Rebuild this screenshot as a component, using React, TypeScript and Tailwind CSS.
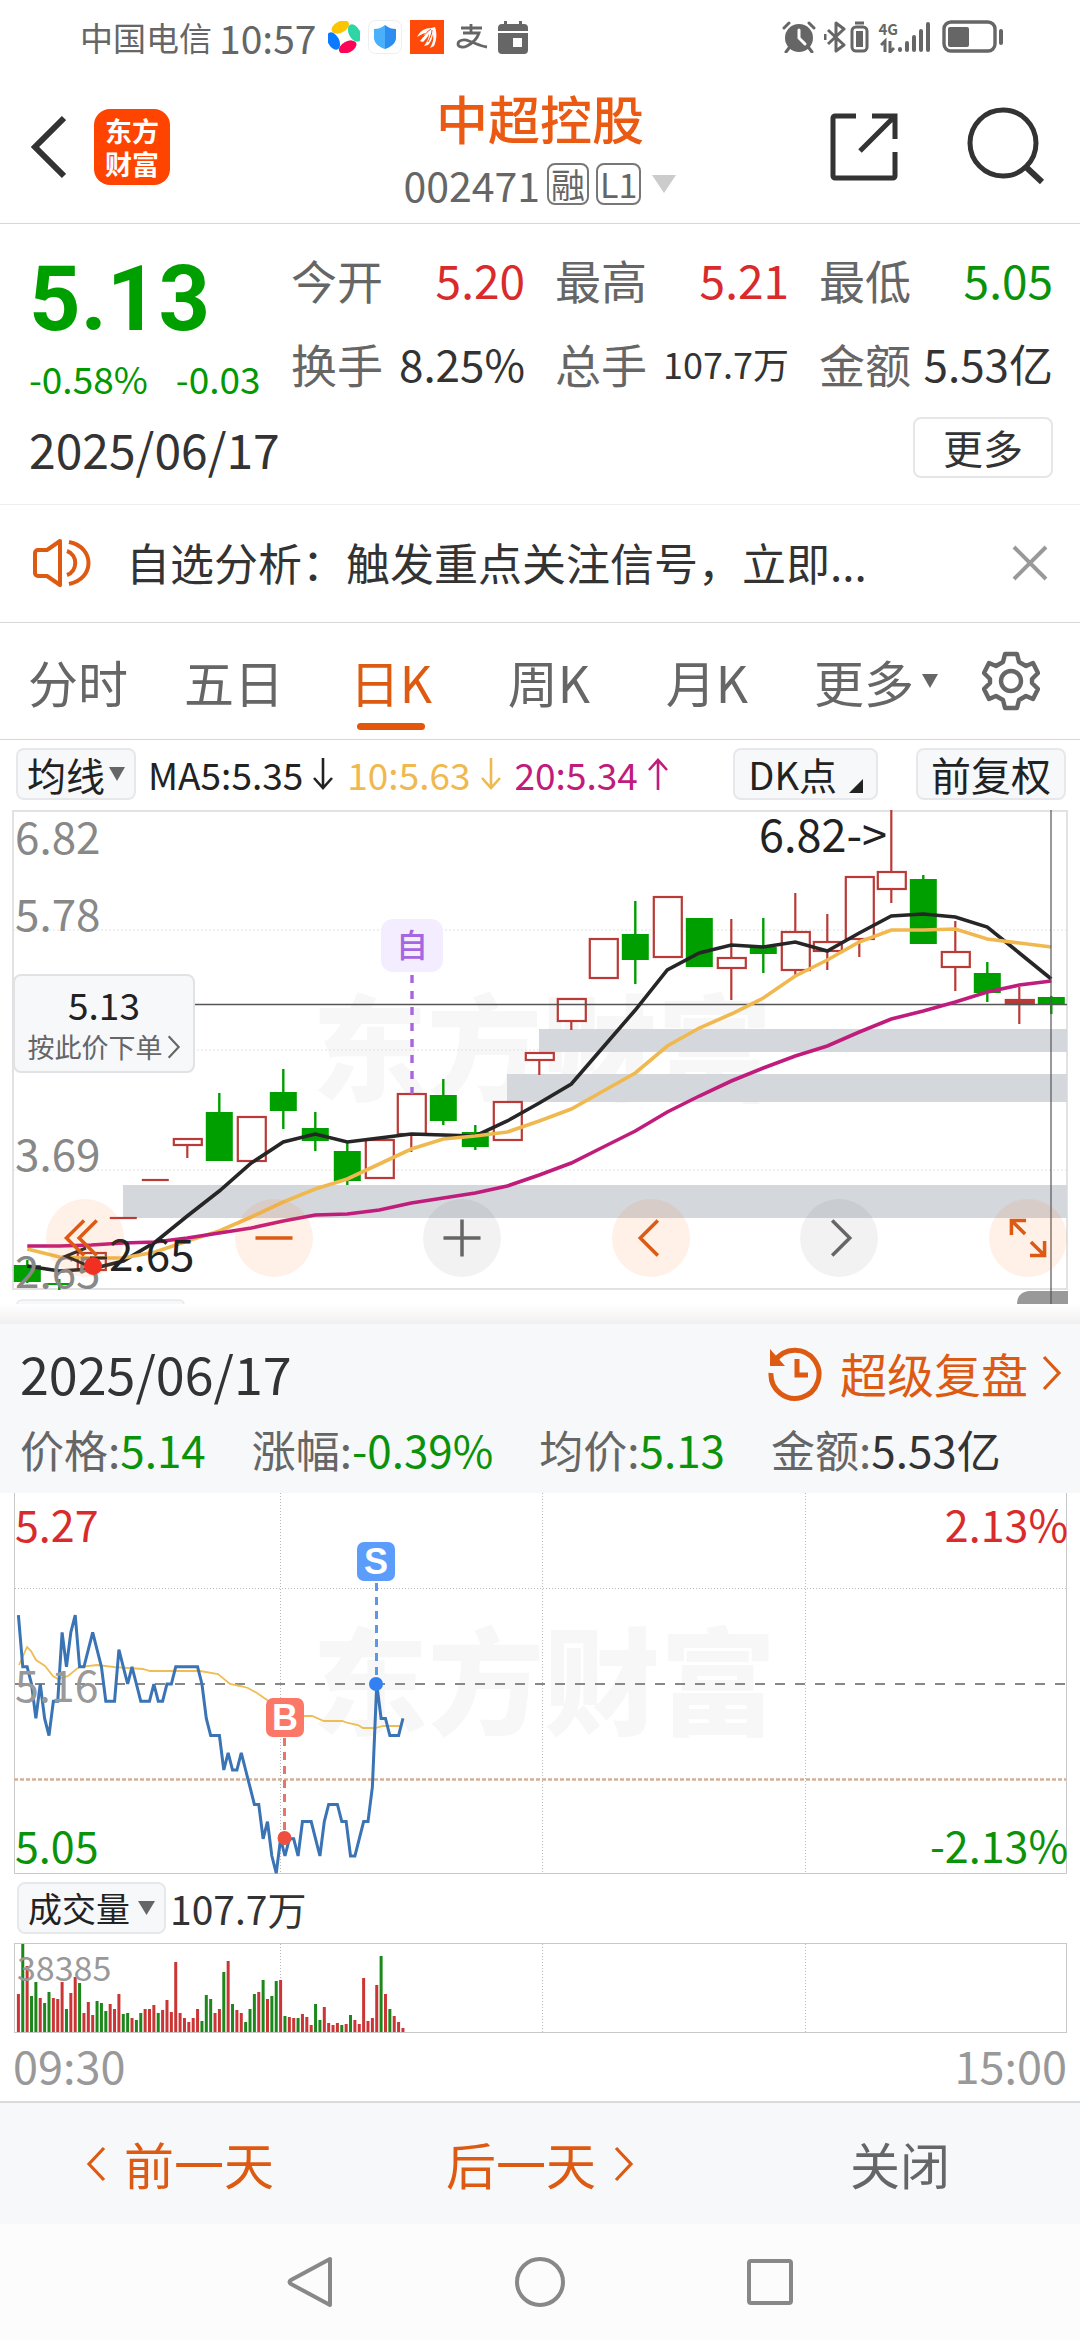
import type { ReactNode } from 'react';

type Candle = {
  open: number;   // 实体上沿
  close: number;  // 实体下沿
  high: number;
  low: number;
  up: boolean;
  solid?: boolean;
};

const GREEN = '#009f00';
const RED = '#b93a36';

const c = (up: boolean, open: number, close: number, high = open, low = close, solid = false): Candle => ({
  up, open, close, high, low, solid,
});

// 日K：每根 K 线的纵向位置
const CANDLES: Candle[] = [
  c(false, 1265, 1282, 1260, 1283),
  c(false, 1283, 1285, 1279, 1290),
  c(true, 1253, 1270),
  c(true, 1218, 1219),
  c(true, 1180, 1181),
  c(true, 1139, 1145, 1139, 1158),
  c(false, 1112, 1161, 1093, 1161),
  c(true, 1117, 1161),
  c(false, 1092, 1111, 1069, 1129),
  c(false, 1128, 1141, 1112, 1151),
  c(false, 1151, 1181, 1143, 1185),
  c(true, 1140, 1178),
  c(true, 1094, 1134, 1094, 1152),
  c(false, 1095, 1121, 1079, 1125),
  c(false, 1132, 1147, 1125, 1150),
  c(true, 1102, 1140),
  c(true, 1053, 1060, 1053, 1075),
  c(true, 999, 1021, 999, 1030),
  c(true, 939, 978),
  c(false, 934, 960, 901, 984),
  c(true, 897, 957),
  c(false, 918, 967),
  c(true, 958, 968, 919, 1000),
  c(false, 947, 954, 918, 973),
  c(true, 932, 970, 893, 977),
  c(true, 942, 951, 914, 970),
  c(true, 877, 939, 877, 957),
  c(true, 872, 889, 810, 903),
  c(false, 879, 944, 875, 944),
  c(true, 952, 967, 921, 991),
  c(false, 973, 993, 962, 1002),
  c(true, 1000, 1004, 987, 1024, true),
  c(false, 997, 1004, 996, 1014),
];

const MA5 = [1266, 1271, 1269, 1261, 1242, 1216, 1191, 1163, 1142, 1134, 1142, 1138, 1134, 1135, 1136, 1121, 1103, 1084, 1047, 1010, 970, 953, 945, 947, 942, 951, 933, 916, 914, 917, 927, 953, 979];
const MA10 = [1249, 1257, 1258, 1258, 1252, 1241, 1231, 1217, 1202, 1189, 1179, 1164, 1149, 1139, 1136, 1132, 1121, 1109, 1091, 1073, 1046, 1028, 1014, 998, 976, 960, 942, 930, 930, 929, 939, 943, 947];
const MA20 = [1246, 1246, 1245, 1243, 1242, 1238, 1233, 1228, 1221, 1215, 1214, 1210, 1203, 1198, 1193, 1186, 1175, 1163, 1147, 1131, 1112, 1096, 1081, 1068, 1056, 1046, 1032, 1019, 1011, 1002, 992, 985, 981];

// 分时价格，单位：分
const PRICES = [
  520, 517, 517, 516, 514, 516, 514, 513, 515, 515, 519, 517, 519, 520, 517, 517, 518, 519, 518, 517,
  515, 515, 515, 518, 517, 516, 517, 516, 515, 515, 515, 516, 515, 515, 516, 516, 517, 517, 517, 517,
  517, 517, 516, 514, 513, 513, 513, 511, 512, 511, 511, 512, 511, 510, 509, 509, 507, 508, 506, 505,
  507, 506, 507, 507, 506, 508, 508, 508, 507, 506, 508, 509, 509, 509, 508, 508, 506, 506, 507, 508,
  508, 510, 516, 514, 514, 513, 513, 513, 514,
];

const AVG_LINE =
  '19,1665 23,1656 27,1647 31,1651 36,1660 45,1666 53,1676 58,1679 68,1676 79,1667 97,1665 114,1667 128,1668 143,1669 150,1671 200,1671 218,1674 230,1684 240,1686 248,1688 257,1693 267,1700 280,1711 290,1714 302,1716 312,1716 324,1721 342,1721 348,1723 358,1725 363,1728 375,1728 383,1726 400,1726';

// 成交量柱，正数为红，负数为绿
const VOLUMES = [
  38, -88, 66, -36, -50, 34, -29, -40, 34, 33, 50, -23, 39, 55, -49, 19, 30, 17, -31, -29,
  -21, 28, 23, 38, -18, -19, 14, -12, -19, 23, 23, 27, -19, 22, 32, 20, 70, 19, 14, 10,
  14, 23, -11, -37, -33, 19, 23, -60, 71, -28, 22, 19, -10, -23, -38, 40, -52, 33, -36, -51,
  52, -16, 15, 14, -14, 18, 15, 7, -28, -12, 25, 9, 7, 9, -7, 8, -17, 12, 8, 54,
  11, 14, 47, -76, 38, -23, 16, 10, 4,
];

const kx = (i: number) => 27.3 + 32 * i;
const mx = (i: number) => 18.4 + 4.37 * i;
const my = (p: number) => 1684 - (p - 516) * 17.2;
const kLine = (arr: number[]) => arr.map((v, i) => `${kx(i)},${v}`).join(' ');

export default function App() {
  return (
    <div className="flex min-h-screen w-full flex-col bg-white font-['Noto_Sans_CJK_SC',sans-serif] text-[#333]">
      <StatusBar />
      <Header />
      <Quote />
      <Notice />
      <Tabs />
      <MaBar />
      <KChart />
      <div className="h-5 bg-gradient-to-b from-white to-[#f0f0f0]" />
      <DayPanel />
      <BottomBar />
      <NavBar />
    </div>
  );
}

/* ---------- 状态栏 ---------- */

function StatusBar() {
  return (
    <div className="flex h-[74px] items-center justify-between pr-[76px] pl-20 text-[#666]">
      <div className="flex items-center">
        <span className="text-[33px] leading-10">中国电信</span>
        <span className="ml-[7px] text-[39px] leading-10">10:57</span>
        <svg className="ml-3 size-8" viewBox="0 0 32 32">
          <ellipse cx="12.3" cy="6" rx="9.4" ry="5.6" transform="rotate(-28 12.3 6)" fill="#fdc400" />
          <ellipse cx="26.5" cy="12" rx="9.4" ry="5.6" transform="rotate(62 26.5 12)" fill="#2fd6a5" />
          <ellipse cx="19.7" cy="26" rx="9.4" ry="5.6" transform="rotate(-28 19.7 26)" fill="#fb0357" />
          <ellipse cx="5.5" cy="20" rx="9.4" ry="5.6" transform="rotate(62 5.5 20)" fill="#0a7bff" />
        </svg>
        <svg className="ml-2 size-[34px]" viewBox="0 0 34 34">
          <rect x="0.5" y="0.5" width="33" height="33" rx="7" fill="#fff" stroke="#eee" />
          <path d="M17 5c4 3 7 4 11 4v9c0 5-5 9-11 11z" fill="#2f8df0" />
          <path d="M17 5c-4 3-7 4-11 4v9c0 5 5 9 11 11z" fill="#4bb0fb" />
        </svg>
        <svg className="ml-2 size-[34px]" viewBox="0 0 34 34">
          <rect width="34" height="34" fill="#ff4a0a" />
          <path d="M7 17c3-6 8-9 14-9l4-1c2 6 2 12-1 19l-4 2c3-5 4-10 3-14-1 5-2 8-5 11l-4 1c3-4 5-8 5-12-2 4-4 6-6 8l-3-1c3-3 4-6 5-8-3 1-5 2-8 4z" fill="#fff" />
          <path d="M13 17c3-4 5-6 8-8M18 22c2-4 4-8 4-12" stroke="#ff4a0a" strokeWidth="1" fill="none" />
        </svg>
        <svg className="ml-3 h-[26px] w-8" viewBox="0 0 32 26" fill="none" stroke="#666" strokeWidth="2.8">
          <path d="M15 0v8M5 4h21M7 9h16c-2 6-6 10-12 13-4 2-9 1-9-2 0-4 6-5 11-3 6 2 11 5 18 6" />
        </svg>
        <svg className="ml-[10px] h-[33px] w-[30px]" viewBox="0 0 30 33">
          <path d="M4 3h22a4 4 0 014 4v3H0V7a4 4 0 014-4zM6 0h3v5H6zM21 0h3v5h-3z" fill="#666" />
          <path d="M0 12h30v17a4 4 0 01-4 4H4a4 4 0 01-4-4zM15 17v9h9v-9z" fill="#666" fillRule="evenodd" />
        </svg>
      </div>
      <div className="flex items-center">
        <svg className="h-8 w-[34px]" viewBox="0 0 34 32">
          <circle cx="17" cy="17" r="14" fill="#666" />
          <path d="M2 7l5-5M27 2l5 5M7 27l-3 4M27 27l3 4" stroke="#666" strokeWidth="3" strokeLinecap="round" />
          <path d="M17 9v8l6 6" stroke="#fff" strokeWidth="3" fill="none" strokeLinecap="round" />
        </svg>
        <svg className="ml-2 h-8 w-[46px]" viewBox="0 0 46 32" fill="none" stroke="#666" strokeWidth="3">
          <path d="M4 9l16 15-8 6V2l8 6L4 23M1 13v6" strokeLinejoin="round" />
          <path d="M31 2h9" strokeWidth="3" />
          <rect x="28" y="6" width="15" height="24" rx="4" />
          <rect x="32" y="10" width="7" height="16" fill="#666" stroke="none" />
        </svg>
        <div className="ml-2 flex items-end">
          <div className="flex flex-col items-center">
            <span className="text-[15px] leading-4 font-bold">4G</span>
            <svg className="h-4 w-4" viewBox="0 0 16 16" fill="none" stroke="#666" strokeWidth="3">
              <path d="M1 8l4-4v11M10 4v11l4-4" />
            </svg>
          </div>
          <svg className="h-8 w-8" viewBox="0 0 32 32" stroke="#666" strokeWidth="4" strokeLinecap="round">
            <path d="M2 28v1M9 22v7M16 16v13M23 10v19M30 3v26" />
          </svg>
        </div>
        <svg className="ml-3 h-[34px] w-[62px]" viewBox="0 0 62 34">
          <rect x="2" y="2" width="51" height="29" rx="7" fill="none" stroke="#666" strokeWidth="3.4" />
          <rect x="6" y="7" width="21" height="20" rx="2" fill="#666" />
          <path d="M59 11v12" stroke="#666" strokeWidth="4" strokeLinecap="round" />
        </svg>
      </div>
    </div>
  );
}

/* ---------- 顶部标题 ---------- */

function Header() {
  return (
    <header className="flex items-center justify-between border-b border-[#d8d8d8] pt-[14px] pr-[34px] pb-[18px] pl-[30px]">
      <div className="flex w-[221px] items-center gap-7">
        <button aria-label="返回">
          <svg className="h-16 w-9" viewBox="0 0 36 64" fill="none" stroke="#333" strokeWidth="6">
            <path d="M34 3L5 32l29 29" />
          </svg>
        </button>
        <div className="flex size-[76px] flex-col items-center justify-center rounded-2xl bg-[#ff4400] text-[27px] leading-[33px] font-bold text-white">
          <span>东方</span>
          <span>财富</span>
        </div>
      </div>
      <div className="flex flex-col items-center gap-[15px] text-[#666]">
        <h1 className="text-[52px] leading-[60px] font-medium text-[#ea5a12]">中超控股</h1>
        <div className="flex items-center gap-[7px]">
          <span className="text-[41px] leading-[42px]">002471</span>
          <span className="rounded-lg border-2 border-[#777] px-0.5 text-[34px] leading-[38px]">融</span>
          <span className="rounded-lg border-2 border-[#777] px-0.5 text-[34px] leading-[38px]">L1</span>
          <Triangle className="ml-1 h-[18px] w-6 text-[#ccc]" />
        </div>
      </div>
      <div className="flex w-[217px] items-center justify-between">
        <button aria-label="分享">
          <svg className="size-[70px]" viewBox="0 0 70 70" fill="none" stroke="#333" strokeWidth="5">
            <path d="M27 4H6a2 2 0 00-2 2v58a2 2 0 002 2h58a2 2 0 002-2V40M43 4h23v23M31 39L66 4" />
          </svg>
        </button>
        <button aria-label="搜索">
          <svg className="size-20" viewBox="0 0 80 80" fill="none" stroke="#333" strokeWidth="5">
            <circle cx="37" cy="36" r="33" />
            <path d="M60 60l16 15" strokeWidth="6" />
          </svg>
        </button>
      </div>
    </header>
  );
}

/* ---------- 行情 ---------- */

function Quote() {
  return (
    <section className="border-b border-[#eee] pt-[27px] pr-[27px] pb-[26px] pl-[29px]">
      <div className="flex">
        <div className="flex w-[262px] shrink-0 flex-col gap-[11px] pt-[5px] text-[#009900]">
          <span className="font-['Roboto',sans-serif] text-[90px] leading-[88px] font-bold text-[#009f00]">5.13</span>
          <div className="flex gap-[28px] text-[37px] leading-[46px]">
            <span>-0.58%</span>
            <span>-0.03</span>
          </div>
        </div>
        <div className="grid flex-1 grid-cols-3 content-start gap-x-[30px] gap-y-7">
          <Stat label="今开" value="5.20" tone="text-[46px] text-[#d92b2b]" />
          <Stat label="最高" value="5.21" tone="text-[46px] text-[#d92b2b]" />
          <Stat label="最低" value="5.05" tone="text-[46px] text-[#0a930a]" />
          <Stat label="换手" value="8.25%" tone="text-[44px]" />
          <Stat label="总手" value="107.7万" tone="text-[36px]" />
          <Stat label="金额" value="5.53亿" tone="text-[44px]" />
        </div>
      </div>
      <div className="mt-4 flex items-center justify-between">
        <span className="text-[48px] leading-[60px]">2025/06/17</span>
        <button className="rounded-lg border-2 border-[#e6e6e6] px-[28px] text-[40px] leading-[57px]">更多</button>
      </div>
    </section>
  );
}

function Stat({ label, value, tone }: { label: string; value: string; tone: string }) {
  return (
    <div className="flex h-14 items-center justify-between whitespace-nowrap">
      <span className="text-[46px] leading-[56px] text-[#666]">{label}</span>
      <span className={`leading-[56px] ${tone}`}>{value}</span>
    </div>
  );
}

/* ---------- 公告 ---------- */

function Notice() {
  return (
    <section className="flex items-center border-b border-[#d8d8d8] pt-[28px] pr-[32px] pb-[30px] pl-8">
      <svg className="h-[50px] w-[60px]" viewBox="0 0 60 50" fill="none" stroke="#dd5a12" strokeWidth="4">
        <path d="M28 3L15 12H6a3 3 0 00-3 3v20a3 3 0 003 3h9l13 9z" strokeLinejoin="round" />
        <path d="M35 13c11 4 11 20 0 24M37 4c26 5 26 37 0 42" />
      </svg>
      <span className="ml-[34px] flex-1 text-[44px] leading-[59px]">自选分析：触发重点关注信号，立即...</span>
      <button aria-label="关闭公告">
        <svg className="size-9" viewBox="0 0 36 36" stroke="#999" strokeWidth="4">
          <path d="M2 2l32 32M34 2L2 34" />
        </svg>
      </button>
    </section>
  );
}

/* ---------- 周期切换 ---------- */

function Tabs() {
  return (
    <nav className="flex items-center justify-between border-b border-[#d8d8d8] pr-10 pl-[28px] text-[50px] leading-[116px] whitespace-nowrap text-[#666]">
      <div className="flex shrink-0 items-center gap-[56px]">
        <button>分时</button>
        <button>五日</button>
        <button className="relative w-[102px] text-[#dd5a12]">
          日K
          <span className="absolute bottom-[9px] left-1/2 h-[7px] w-[68px] -translate-x-1/2 rounded-full bg-[#e2570c]" />
        </button>
        <button className="w-[102px]">周K</button>
        <button className="w-[102px]">月K</button>
        <button className="flex items-center gap-2">
          更多
          <Triangle className="h-[14px] w-4" />
        </button>
      </div>
      <button aria-label="设置">
        <svg className="h-[60px] w-[58px]" viewBox="0 0 58 60" fill="none" stroke="#666" strokeWidth="4.4" strokeLinejoin="round">
          <path d="M23 3h12l2 8 7 4 7-3 5 10-6 6v4l6 6-5 10-7-3-7 4-2 8H23l-2-8-7-4-7 3-5-10 6-6v-4l-6-6 5-10 7 3 7-4z" />
          <circle cx="29" cy="30" r="10" />
        </svg>
      </button>
    </nav>
  );
}

/* ---------- 均线栏 ---------- */

function MaBar() {
  return (
    <div className="flex items-center pt-[8px] pr-[14px] pb-[10px] pl-4 whitespace-nowrap text-[#222]">
      <Chip>
        <span className="text-[39px]">均线</span>
        <Triangle className="h-[14px] w-4 text-[#666]" />
      </Chip>
      <div className="ml-3 flex items-center gap-2 text-[37px] leading-[52px]">
        <span>MA5:5.35</span>
        <Arrow />
        <span className="ml-1 text-[#f0b94f]">10:5.63</span>
        <Arrow className="text-[#f0b94f]" />
        <span className="ml-1 text-[#c01c7c]">20:5.34</span>
        <Arrow className="rotate-180 text-[#c01c7c]" />
      </div>
      <div className="ml-auto flex gap-[38px]">
        <Chip wide>
          <span className="text-[38px]">DK点</span>
          <svg className="mt-6 ml-2 size-[14px]" viewBox="0 0 14 14">
            <path d="M14 0v14H0z" fill="#222" />
          </svg>
        </Chip>
        <Chip wide>
          <span className="text-[40px]">前复权</span>
        </Chip>
      </div>
    </div>
  );
}

function Chip({ wide, children }: { wide?: boolean; children: ReactNode }) {
  return (
    <button
      className={`flex h-[52px] items-center gap-1 rounded-lg border-2 border-[#e6e8eb] bg-[#f7f8fa] leading-[48px] text-[#222] ${wide ? 'px-[13px]' : 'px-[9px]'}`}
    >
      {children}
    </button>
  );
}

/* ---------- 日K图 ---------- */

function KChart() {
  return (
    <section className="relative">
      <svg className="block h-auto w-full overflow-visible" viewBox="0 810 1080 494">
        <text x="312" y="1092" fontSize="115" fontWeight="900" fill="#f7f7f7">东方财富</text>
        {/* 网格 */}
        <rect x="13" y="811" width="1054" height="478" fill="none" stroke="#e2e2e2" strokeWidth="2" />
        <path d="M13 930H1067M13 1050H1067M13 1170H1067" stroke="#e2e2e2" strokeDasharray="2 2" />
        {/* 缺口 */}
        <rect x="123" y="1185" width="944" height="33" fill="#d4d7dc" />
        <rect x="507" y="1074" width="560" height="28" fill="#d4d7dc" />
        <rect x="539" y="1029" width="528" height="23" fill="#d4d7dc" />

        {CANDLES.map((k, i) => <CandleBar key={i} k={k} x={kx(i)} />)}

        <path d="M194 1004.5H1067" stroke="#555" strokeWidth="1.4" />
        <g fill="none" strokeWidth="3.6">
          <polyline points={kLine(MA5)} stroke="#262626" />
          <polyline points={kLine(MA10)} stroke="#f0b94f" />
          <polyline points={kLine(MA20)} stroke="#c01c7c" />
        </g>

        <g fontSize="44" fill="#888">
          <text x="15" y="854">6.82</text>
          <text x="15" y="931">5.78</text>
          <text x="15" y="1171">3.69</text>
          <text x="15" y="1288">2.65</text>
        </g>
        <text x="759" y="852" fontSize="45" fill="#222">6.82-&gt;</text>
        <text x="109" y="1271" fontSize="44" fill="#222">2.65</text>
        <path d="M86 1248l-20 8 20 9M90 1258h17" stroke="#262626" strokeWidth="3" fill="none" />
        <circle cx="93" cy="1266" r="9" fill="#f02a22" />

        {/* 自选标记 */}
        <rect x="381" y="919" width="62" height="53" rx="12" fill="#f4ecff" />
        <text x="412" y="957" fontSize="32" fontWeight="500" textAnchor="middle" fill="#a566e0">自</text>
        <path d="M412 975V1094" stroke="#a566e0" strokeWidth="3.4" strokeDasharray="8 8" />

        {/* 十字光标 */}
        <path d="M1017 1304c0-8 5-13 13-13h38v13z" fill="#999" />
        <path d="M1051 810V1304" stroke="#555" strokeOpacity="0.6" strokeWidth="2" />
        <path d="M17 1304q0-4 6-4h155q6 0 6 4" fill="#f7f8fa" stroke="#dcdfe4" />
      </svg>

      <button className="absolute top-[164px] left-[13px] flex h-[99px] w-[182px] flex-col items-center rounded-lg border-2 border-[#e0e2e6] bg-[#f7f8fa] pt-1">
        <span className="text-[37px] leading-[48px] text-[#222]">5.13</span>
        <span className="flex items-center gap-1 text-[27px] leading-[38px] text-[#666]">
          按此价下单
          <Chevron className="h-6 w-[14px]" />
        </span>
      </button>

      <div className="absolute top-[389px] right-[13px] left-[46px] flex justify-between">
        <RoundButton label="最左" hot>
          <path d="M38 22L20 40l18 18M51 22L33 40l18 18" />
        </RoundButton>
        <RoundButton label="缩小" hot>
          <path d="M20 40h38" />
        </RoundButton>
        <RoundButton label="放大">
          <path d="M20 40h38M39 21v38" />
        </RoundButton>
        <RoundButton label="左移" hot>
          <path d="M46 22L28 40l18 18" />
        </RoundButton>
        <RoundButton label="右移">
          <path d="M32 22l18 18-18 18" />
        </RoundButton>
        <RoundButton label="全屏" hot>
          <path d="M22 37V22h15M23 23l13 13M41 58h15V43M55 57L42 44" />
        </RoundButton>
      </div>
    </section>
  );
}

function CandleBar({ k, x }: { k: Candle; x: number }) {
  const h = k.close - k.open;
  if (!k.up) {
    return (
      <g fill={GREEN} stroke={GREEN}>
        <rect x={x - 13.5} y={k.open} width="27" height={h} stroke="none" />
        <path d={`M${x} ${k.high}V${k.low}`} strokeWidth="2.4" />
      </g>
    );
  }
  return (
    <g stroke={RED} strokeWidth="2.2" fill={k.solid ? RED : h > 1 ? '#fff' : RED}>
      {h > 1 ? (
        <rect x={x - 13.5} y={k.open} width="28" height={h} />
      ) : (
        <path d={`M${x - 13.5} ${k.open}h27`} />
      )}
      {k.high < k.open && <path d={`M${x} ${k.high}V${k.open}`} />}
      {k.low > k.close && <path d={`M${x} ${k.close}V${k.low}`} />}
    </g>
  );
}

function RoundButton({ label, hot, children }: { label: string; hot?: boolean; children: ReactNode }) {
  return (
    <button
      aria-label={label}
      className={`size-[78px] rounded-full ${hot ? 'bg-[#ff6a1f]/10 text-[#dd5a12]' : 'bg-black/5 text-[#666]'}`}
    >
      <svg className="size-[78px]" viewBox="0 0 78 80" fill="none" stroke="currentColor" strokeWidth="3.6">
        {children}
      </svg>
    </button>
  );
}

/* ---------- 当日分时 ---------- */

function DayPanel() {
  return (
    <section>
      <div className="flex flex-col gap-[22px] bg-[#f7f8fa] pt-[19px] pr-[18px] pb-[20px] pl-5">
        <div className="flex items-center justify-between">
          <span className="text-[52px] leading-[60px]">2025/06/17</span>
          <a href="#replay" className="flex items-center text-[47px] leading-[60px] text-[#dd5a12]">
            <svg className="h-[56px] w-[56px]" viewBox="0 0 56 56" fill="none" stroke="currentColor" strokeWidth="5">
              <path d="M7 16a24 24 0 11-4 12" />
              <path d="M2 4v17h15z" fill="currentColor" stroke="none" />
              <path d="M29 14v16h11" />
            </svg>
            <span className="ml-[16px]">超级复盘</span>
            <Chevron className="ml-[14px] h-9 w-5" />
          </a>
        </div>
        <div className="flex gap-[46px] text-[44px] leading-[48px] whitespace-nowrap text-[#666]">
          <span>价格:<b className="font-normal text-[#0a930a]">5.14</b></span>
          <span>涨幅:<b className="font-normal text-[#0a930a]">-0.39%</b></span>
          <span>均价:<b className="font-normal text-[#0a930a]">5.13</b></span>
          <span>金额:<b className="font-normal text-[#333]">5.53亿</b></span>
        </div>
      </div>

      <svg className="block h-auto w-full overflow-visible" viewBox="0 1493 1080 381">
        <text x="312" y="1726" fontSize="116" fontWeight="900" fill="#f7f7f7">东方财富</text>
        <path d="M14.5 1493V1873.5H1066.5V1493" fill="none" stroke="#c9c9c9" />
        <path d="M280.5 1493V1873M542.5 1493V1873M805.5 1493V1873M15 1588.5H1066" stroke="#b8b8b8" strokeDasharray="1 2" />
        <path d="M15 1684H1066" stroke="#888" strokeWidth="2" strokeDasharray="10 10" />
        <path d="M14 1779.5H1066" stroke="#d3b096" strokeWidth="2.4" strokeDasharray="4 2" />
        <polyline points={AVG_LINE} fill="none" stroke="#f0bd55" strokeWidth="1.8" />
        <polyline
          points={PRICES.map((p, i) => `${mx(i)},${my(p)}`).join(' ')}
          fill="none"
          stroke="#3a74b5"
          strokeWidth="3"
        />
        <g fontSize="43">
          <text x="15" y="1542" fill="#d92b2b">5.27</text>
          <text x="15" y="1702" fill="#999">5.16</text>
          <text x="15" y="1863" fill="#0a930a">5.05</text>
          <text x="1068" y="1542" textAnchor="end" fill="#d92b2b">2.13%</text>
          <text x="1068" y="1863" textAnchor="end" fill="#0a930a">-2.13%</text>
        </g>
        {/* 买卖点 */}
        <path d="M376.5 1583V1684" stroke="#5c98e6" strokeWidth="3" strokeDasharray="8 6" />
        <circle cx="376" cy="1684" r="7" fill="#3380f2" />
        <rect x="357" y="1542" width="38" height="39" rx="7" fill="#5c9dfb" />
        <path d="M284.5 1738V1838" stroke="#e2776a" strokeWidth="3" strokeDasharray="8 6" />
        <circle cx="284.5" cy="1838" r="7" fill="#ee4f3f" />
        <rect x="266" y="1698" width="38" height="39" rx="7" fill="#fb7868" />
        <g fontFamily="Liberation Sans" fontSize="36" fontWeight="700" textAnchor="middle" fill="#fff">
          <text x="376" y="1574">S</text>
          <text x="285" y="1730">B</text>
        </g>
      </svg>

      <div className="flex items-center gap-1 pt-[8px] pb-[9px] pl-[17px] text-[#222]">
        <Chip>
          <span className="text-[34px]">成交量</span>
          <Triangle className="ml-1 h-[14px] w-[17px] text-[#666]" />
        </Chip>
        <span className="text-[39px] leading-[51px] text-[#333]">107.7万</span>
      </div>

      <svg className="block h-auto w-full overflow-visible" viewBox="0 1943 1080 90">
        <rect x="14.5" y="1943.5" width="1052" height="89" fill="none" stroke="#c9c9c9" />
        <path d="M280.5 1944V2032M542.5 1944V2032M805.5 1944V2032" stroke="#b8b8b8" strokeDasharray="1 2" />
        {VOLUMES.map((v, i) => (
          <rect
            key={i}
            x={mx(i) - 1.5}
            y={2032 - Math.abs(v)}
            width="3"
            height={Math.abs(v)}
            fill={v > 0 ? '#cb3535' : '#1c881c'}
          />
        ))}
        <text x="17" y="1981" fontSize="34" fill="#999">38385</text>
      </svg>

      <div className="flex justify-between px-[13px] pt-1 pb-2 text-[45px] leading-[56px] text-[#999]">
        <span>09:30</span>
        <span>15:00</span>
      </div>
    </section>
  );
}

/* ---------- 底部 ---------- */

function BottomBar() {
  return (
    <div className="grid grid-cols-3 border-t-2 border-[#d8dadd] bg-[#f7f8fa] py-[28px] text-[50px] leading-[65px] text-[#dd5a12]">
      <button className="flex items-center justify-center gap-[18px]">
        <Chevron className="h-9 w-5 rotate-180" />
        前一天
      </button>
      <button className="flex items-center justify-center gap-[18px]">
        后一天
        <Chevron className="h-9 w-5" />
      </button>
      <button className="text-[#666]">关闭</button>
    </div>
  );
}

function NavBar() {
  return (
    <div className="flex flex-1 items-center justify-center gap-[178px] bg-[#fcfcfc] py-6">
      <button aria-label="系统返回">
        <svg className="size-[52px]" viewBox="0 0 52 52" fill="none" stroke="#888" strokeWidth="4" strokeLinejoin="round">
          <path d="M46 3v46L7 28q-3-2 0-4z" />
        </svg>
      </button>
      <button aria-label="主屏幕">
        <svg className="size-[52px]" viewBox="0 0 52 52" fill="none" stroke="#888" strokeWidth="4">
          <circle cx="26" cy="26" r="23" />
        </svg>
      </button>
      <button aria-label="最近任务">
        <svg className="size-[52px]" viewBox="0 0 52 52" fill="none" stroke="#888" strokeWidth="4">
          <rect x="5" y="5" width="42" height="42" rx="2" />
        </svg>
      </button>
    </div>
  );
}

/* ---------- 小图标 ---------- */

function Triangle({ className = '' }: { className?: string }) {
  return (
    <svg className={className} viewBox="0 0 16 14" preserveAspectRatio="none">
      <path d="M0 0h16L8 14z" fill="currentColor" />
    </svg>
  );
}

function Chevron({ className = '' }: { className?: string }) {
  return (
    <svg className={className} viewBox="0 0 20 36" fill="none" stroke="currentColor" strokeWidth="3.2">
      <path d="M2 2l15 16L2 34" />
    </svg>
  );
}

function Arrow({ className = '' }: { className?: string }) {
  return (
    <svg className={`h-8 w-[24px] ${className}`} viewBox="0 0 24 32" fill="none" stroke="currentColor" strokeWidth="2.6">
      <path d="M12 0v30M3 20l9 10 9-10" />
    </svg>
  );
}
